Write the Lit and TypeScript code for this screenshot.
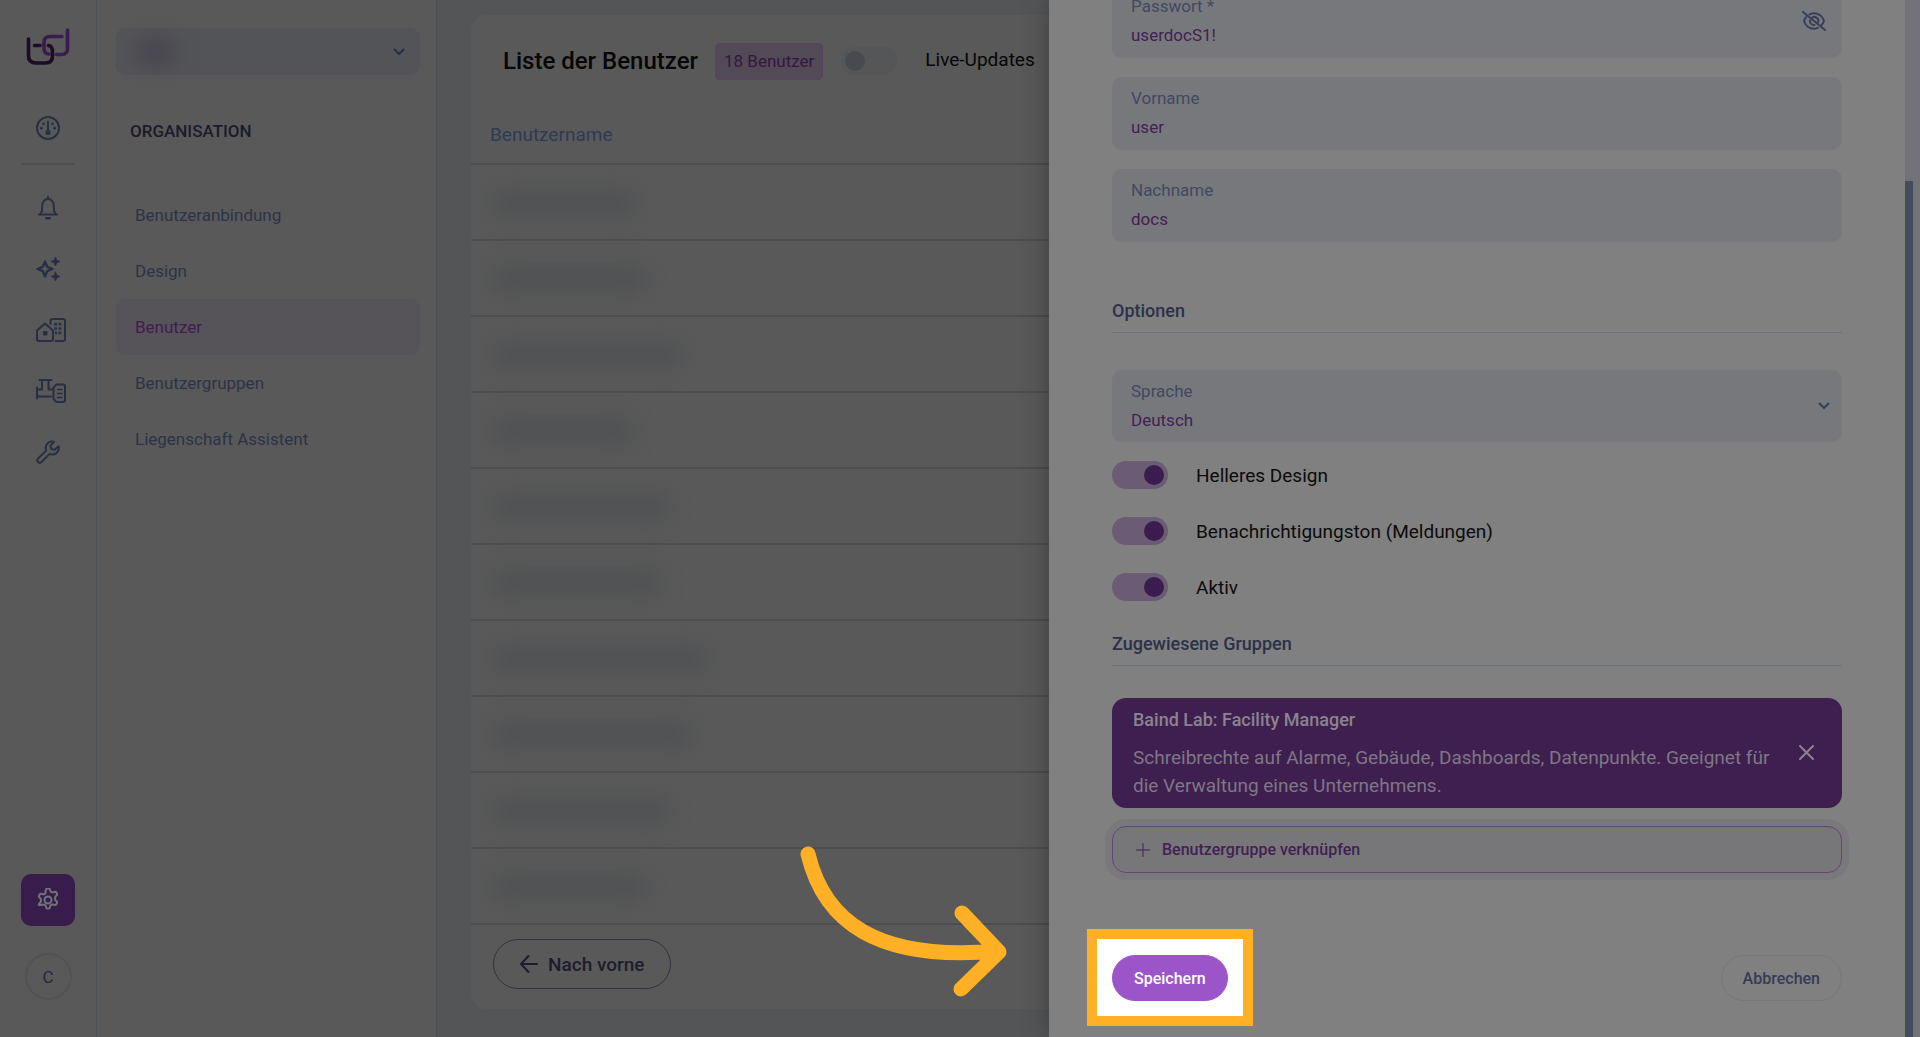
import { LitElement, html, css, svg } from "lit";
import { customElement } from "lit/decorators.js";
import { classMap } from "lit/directives/class-map.js";

const icons = {
  gauge: svg`<circle cx="12" cy="12" r="11"/><path d="M12 5.5v10"/><g fill="currentColor" stroke="none"><circle cx="12" cy="16.5" r="2.6"/><circle cx="7.6" cy="7.8" r="1.4"/><circle cx="16.4" cy="7.8" r="1.4"/><circle cx="5.4" cy="12.2" r="1.4"/><circle cx="18.6" cy="12.2" r="1.4"/></g>`,
  bell: svg`<path d="M12 1v2M3 18.5h18M4.5 18c1.6-1.800 1.700-4 1.700-7.500C6.200 6 8.500 3 12 3s5.800 3 5.800 7.500c0 3.500.1 5.700 1.700 7.500"/><path d="M9 21h6a3 2.600 0 0 1-6 0z" fill="currentColor" stroke="none"/>`,
  sparkles: svg`<path d="M9 4.500l2.200 5.300L16.500 12l-5.300 2.200L9 19.500l-2.200-5.300L1.500 12l5.300-2.200z" stroke-width="2.400"/><path d="M19.500 0l1.300 3.200L24 4.500l-3.200 1.300L19.500 9l-1.300-3.200L15 4.500l3.200-1.300zM19.500 15l1.300 3.200 3.200 1.300-3.200 1.300L19.500 24l-1.300-3.200-3.200-1.300 3.200-1.300z" fill="currentColor" stroke-width="0.8"/>`,
  buildings: svg`<path d="M1 12.500L9 5.500l8 7V21a2 2 0 0 1-2 2H3a2 2 0 0 1-2-2z"/><path d="M14.500 6V3a2 2 0 0 1 2-2H27a2 2 0 0 1 2 2v18a2 2 0 0 1-2 2h-7.500"/><g fill="currentColor" stroke="none"><rect x="7" y="13" width="4.500" height="4.500" rx="1"/><path d="M18.200 4.800h2.800v2.600h-2.800zM22.500 4.800h2.800v2.600h-2.800zM18.200 9.200h2.800v2.600h-2.800zM22.500 9.200h2.800v2.600h-2.800zM19 13.600h2v2.600h-2zM22.500 13.600h2.800v2.600h-2.800z"/></g>`,
  plant: svg`<path d="M1 8.500v11M1 10.500h5V1.500M3.500 1h12M12.500 1.500v9h3.500M1 17.500h14"/><path d="M20.500 5.500H27a2 2 0 0 1 2 2V21a2 2 0 0 1-2 2h-6.500L17.500 20V8.500z"/><path d="M21.500 10.500h4.500M21.500 14.500h4.500M21.500 18.500h4.500" stroke-width="1.500"/>`,
  wrench: svg`<path d="M15.500 1.600a6.500 6.500 0 0 0-5.300 9L1.800 18.800a2.500 2.500 0 0 0 3.500 3.500l8.300-8.400a6.500 6.500 0 0 0 9-7.700l-3.900 3.600-3.400-.7-.9-3.500 3.700-3.600a6.500 6.500 0 0 0-2.600-.4z"/>`,
  gear: svg`<path d="M9.600 3.600L10.200 1.700Q10.400 1 11.200 1h1.600q.8 0 1 .7l.6 1.900q.2.600.9.900l.6.300q.6.300 1.200.1l1.900-.5q.8-.2 1.200.5l.8 1.400q.4.700-.1 1.300l-1.300 1.400q-.5.500-.5 1.200v1.600q0 .7.500 1.200l1.300 1.400q.5.600.1 1.300l-.8 1.400q-.4.700-1.200.5l-1.900-.5q-.6-.2-1.200.1l-.6.300q-.7.300-.9.900l-.6 1.900q-.2.700-1 .7h-1.600q-.8 0-1-.7l-.6-1.900q-.2-.6-.9-.9l-.6-.3q-.6-.3-1.200-.1l-1.900.5q-.8.200-1.200-.5L3 17.700q-.4-.7.1-1.300L4.400 15q.5-.5.500-1.200v-1.600q0-.7-.5-1.200L3.100 9.600q-.5-.6-.1-1.300l.8-1.400q.4-.7 1.200-.5l1.900.5q.6.200 1.200-.1l.6-.3q.7-.3.8-.9z" transform="translate(0 -.6)"/><circle cx="12" cy="12" r="3.500"/>`,
  chevron: svg`<path d="M1.500 1.500L6 6l4.500-4.500"/>`,
  back: svg`<path d="M17 9H1M8.500 1L1 9l7.500 8"/>`,
  eyeOff: svg`<path d="M1 1l22 18M7.500 3.300C8.900 2.700 10.400 2.300 12 2.300c5 0 8.700 3.600 10 7.700-.5 1.500-1.300 2.900-2.500 4.100M4 6.200C3 7.400 2.400 8.700 2 10c1.300 4.100 5 7.700 10 7.700 1.400 0 2.600-.3 3.800-.8"/><path d="M10 6.700a4 4 0 0 1 6 4.800M8 9.500a4 4 0 0 0 4.500 4.500"/>`,
  close: svg`<path d="M1 1l13 13M14 1L1 14"/>`,
  plus: svg`<path d="M7 .5v13M.5 7h13"/>`,
};

const icon = (shape: unknown, w: number, h: number, stroke = 2) => html`
  <svg width=${w} height=${h} viewBox="0 0 ${w} ${h}" fill="none" stroke="currentColor"
    stroke-width=${stroke} stroke-linecap="round" stroke-linejoin="round" aria-hidden="true">${shape}</svg>`;

const base = css`
  :host {
    display: block;
    font-family: Roboto, "Liberation Sans", sans-serif;
  }
  * { box-sizing: border-box; }
  svg { display: block; flex: none; }
  button, input, select { font: inherit; margin: 0; }
  button { cursor: pointer; }
  .switch {
    appearance: none;
    flex: none;
    width: 56px;
    height: 28px;
    border-radius: 14px;
    padding: 4px;
    background: #6b5b75;
    display: flex;
    justify-content: flex-end;
  }
  .switch::before {
    content: "";
    width: 20px;
    height: 20px;
    border-radius: 50%;
    background: #3b1c4e;
  }
  .switch.off { background: #545658; justify-content: flex-start; }
  .switch.off::before { background: #474b50; }
`;

@customElement("side-rail")
class SideRail extends LitElement {
  static styles = [base, css`
    nav {
      height: 100%;
      display: flex;
      flex-direction: column;
      align-items: center;
      padding: 28px 0 37px;
      color: #292f43;
      border-right: 1px solid #4c5156;
    }
    .list {
      display: flex;
      flex-direction: column;
      gap: 37px;
      padding-left: 36px;
      width: 100%;
    }
    a { color: inherit; display: block; }
    .first { padding: 50px 0 23px; }
    .rule {
      width: 54px;
      height: 2px;
      background: #4c5156;
      margin-bottom: 31px;
    }
    .settings {
      margin-top: auto;
      width: 54px;
      height: 52px;
      border-radius: 10px;
      background: #381c4b;
      color: #74717a;
      display: grid;
      place-items: center;
    }
    .avatar {
      margin-top: 27px;
      width: 47px;
      height: 47px;
      border-radius: 50%;
      border: 2px solid #535353;
      background: none;
      color: #23283a;
      font-size: 17px;
      padding: 0;
    }
  `];
  render() {
    return html`<nav aria-label="Hauptnavigation">
      <svg width="44" height="38" viewBox="0 0 44 38" fill="none" stroke-width="3.6" stroke-linecap="round" aria-hidden="true">
        <path stroke="#3b1c4e" d="M41.500 2v18.500q0 6-6 6h-5M36 8.500H24q-6 0-6 6V20q0 6 5 6"/>
        <path stroke="#1d0c26" d="M2.500 11v16.500q0 7.500 7.500 7.500h9.500q7 0 7-7V24q0-6-4-6.500M8.500 17.500H14"/>
      </svg>
      <a class="first" href="#dashboard" aria-label="Dashboard">${icon(icons.gauge, 24, 24)}</a>
      <div class="rule"></div>
      <div class="list">
        <a href="#alarms" aria-label="Meldungen">${icon(icons.bell, 24, 24)}</a>
        <a href="#assistant" aria-label="Assistent">${icon(icons.sparkles, 24, 24)}</a>
        <a href="#buildings" aria-label="Gebäude">${icon(icons.buildings, 30, 24)}</a>
        <a href="#plants" aria-label="Anlagen">${icon(icons.plant, 30, 24)}</a>
        <a href="#tools" aria-label="Werkzeuge">${icon(icons.wrench, 24, 24)}</a>
      </div>
      <a class="settings" href="#settings" aria-label="Einstellungen">${icon(icons.gear, 24, 24)}</a>
      <button class="avatar">C</button>
    </nav>`;
  }
}

@customElement("section-nav")
class SectionNav extends LitElement {
  static styles = [base, css`
    nav {
      height: 100%;
      padding: 28px 16px 0 19px;
      border-right: 1px solid #4c4e56;
    }
    .org {
      position: relative;
      display: flex;
      align-items: center;
      justify-content: flex-end;
      height: 47px;
      padding-right: 15px;
      border-radius: 10px;
      background: #525457;
      color: #292f43;
    }
    .org select {
      position: absolute;
      inset: 0;
      width: 100%;
      appearance: none;
      border: 0;
      background: none;
    }
    .redacted {
      position: absolute;
      left: 20px;
      top: 10px;
      width: 40px;
      height: 28px;
      border-radius: 14px;
      background: #494650;
      filter: blur(10px);
    }
    h2 {
      margin: 0;
      padding: 46px 14px 44px;
      font-size: 17px;
      line-height: 20px;
      font-weight: 500;
      color: #1b1b2a;
    }
    a {
      display: block;
      padding: 0 19px;
      line-height: 56px;
      font-size: 17px;
      color: #2d3346;
      text-decoration: none;
      border-radius: 10px;
    }
    .list { padding-top: 2px; }
    a.active { background: #565359; color: #3d1e52; }
  `];
  render() {
    const items = ["Benutzeranbindung", "Design", "Benutzer", "Benutzergruppen", "Liegenschaft Assistent"];
    return html`<nav>
      <div class="org">
        <span class="redacted"></span>
        ${icon(icons.chevron, 12, 8)}
        <select aria-label="Organisation"><option></option></select>
      </div>
      <h2>ORGANISATION</h2>
      <div class="list">
        ${items.map((t) => html`<a href="#${t}" class=${classMap({ active: t === "Benutzer" })}>${t}</a>`)}
      </div>
    </nav>`;
  }
}

@customElement("user-list")
class UserList extends LitElement {
  static styles = [base, css`
    .card {
      background: #595959;
      border-radius: 14px;
      overflow: hidden;
    }
    header {
      display: flex;
      align-items: center;
      height: 92px;
      padding: 0 32px;
    }
    h1 {
      margin: 0;
      font-size: 24px;
      font-weight: 500;
      color: #060606;
    }
    .badge {
      margin: 0 18px 0 17px;
      padding: 0 8px;
      border: 1px solid #57435f;
      border-radius: 5px;
      background: #524a56;
      color: #321840;
      font-size: 17px;
      line-height: 35px;
    }
    label { margin-left: 28px; font-size: 19px; line-height: 24px; padding-bottom: 2px; color: #060606; }
    table { width: 100%; border-collapse: collapse; }
    th {
      height: 57px;
      padding: 0 19px 2px;
      text-align: left;
      font-weight: 400;
      font-size: 19px;
      color: #2f3a54;
    }
    td { height: 76px; padding: 2px 22px 0; }
    th, td { border-bottom: 2px solid #4b4d4f; }
    .redacted {
      display: block;
      height: 24px;
      border-radius: 12px;
      background: #4e5154;
      filter: blur(10px);
    }
    footer { padding: 14px 22px 20px; }
    .back {
      display: flex;
      align-items: center;
      gap: 10px;
      height: 50px;
      padding: 0 26px;
      border: 1px solid #33323f;
      border-radius: 25px;
      background: none;
      color: #1d1d2c;
      font-size: 19px;
      font-weight: 500;
    }
  `];
  render() {
    const widths = [142, 154, 188, 140, 176, 168, 214, 198, 176, 154];
    return html`<section class="card">
      <header>
        <h1>Liste der Benutzer</h1>
        <span class="badge">18 Benutzer</span>
        <input class="switch off" type="checkbox" id="live">
        <label for="live">Live-Updates</label>
      </header>
      <table>
        <thead><tr><th>Benutzername</th></tr></thead>
        <tbody>${widths.map((w) => html`<tr><td><span class="redacted" style="width:${w}px"></span></td></tr>`)}</tbody>
      </table>
      <footer><button class="back">${icon(icons.back, 18, 18)}Nach vorne</button></footer>
    </section>`;
  }
}

@customElement("user-drawer")
class UserDrawer extends LitElement {
  static styles = [base, css`
    .drawer {
      height: 100%;
      display: flex;
      background: #808080;
      box-shadow: 0 0 26px #0000004d;
      overflow: hidden;
    }
    form {
      flex: 1;
      min-width: 0;
      display: flex;
      flex-direction: column;
      justify-content: flex-end;
      padding: 0 63px 36px;
    }
    .track { flex: none; width: 15px; background: #737279; display: flex; align-items: flex-end; }
    .thumb { width: 8px; height: calc(100% - 181px); background: #464d5a; }
    .field {
      position: relative;
      flex: none;
      height: 73px;
      padding: 10px 19px 0;
      margin-bottom: 19px;
      border-radius: 10px;
      background: #77787c;
    }
    .field.language { height: 72px; }
    .field label { display: block; font-size: 17px; line-height: 22px; color: #414960; }
    .field input, .field select {
      display: block;
      width: 100%;
      height: 36px;
      padding: 0;
      border: 0;
      outline: 0;
      appearance: none;
      background: none;
      font-size: 17px;
      color: #432054;
    }
    .reveal {
      position: absolute;
      right: 16px;
      top: 26px;
      padding: 0;
      border: 0;
      background: none;
      color: #363e5a;
    }
    .arrow {
      position: absolute;
      right: 12px;
      top: 32px;
      color: #363e5a;
      pointer-events: none;
    }
    h3 {
      flex: none;
      margin: 0;
      padding-bottom: 9px;
      border-bottom: 1px solid #6c727c;
      font-size: 18px;
      line-height: 24px;
      font-weight: 500;
      color: #2c3149;
    }
    .options { margin: 38px 0 37px; }
    .toggles { display: flex; flex-direction: column; gap: 28px; }
    .toggle { display: flex; align-items: center; gap: 28px; height: 28px; font-size: 19px; color: #0b0b0b; }
    .groups { margin-top: 31px; margin-bottom: 32px; }
    .group {
      display: flex;
      align-items: center;
      gap: 20px;
      padding: 7px 28px 8px 21px;
      min-height: 110px;
      border-radius: 14px;
      background: #3e1f50;
      color: #7f7783;
    }
    .group div { flex: 1; }
    .group h4 { margin: 0 0 9px; font-size: 18px; line-height: 30px; font-weight: 500; color: #8b838f; }
    .group p { margin: 0; font-size: 19px; line-height: 28px; }
    .remove { padding: 0; border: 0; background: none; color: #8b838f; }
    .link {
      flex: none;
      display: flex;
      align-items: center;
      gap: 12px;
      height: 47px;
      margin-top: 18px;
      padding: 0 23px;
      border: 1px solid #644578;
      border-radius: 14px;
      background: #777779;
      box-shadow: 0 0 0 7px #79797b;
      color: #421f55;
      font-size: 16px;
      font-weight: 500;
    }
    .actions { display: flex; justify-content: space-between; margin-top: 82px; }
    .actions button { height: 46px; padding: 0 21px; border-radius: 23px; font-size: 16px; font-weight: 500; }
    .focus { position: relative; }
    .focus::before {
      content: "";
      position: absolute;
      inset: -26px -25px -25px;
      border: 10px solid #ffb024;
      background: #fff;
    }
    .actions .save { position: relative; border: 1px solid #9b55c9; background: #9b55c9; color: #fff; }
    .actions .cancel { border: 1px solid #77777c; background: none; color: #343c57; }
  `];
  render() {
    const toggles = ["Helleres Design", "Benachrichtigungston (Meldungen)", "Aktiv"];
    return html`<div class="drawer">
      <form>
        <div class="field">
          <label for="pw">Passwort *</label><input id="pw" value="userdocS1!">
          <button class="reveal" type="button" aria-label="Passwort verbergen">${icon(icons.eyeOff, 24, 20)}</button>
        </div>
        <div class="field"><label for="first">Vorname</label><input id="first" value="user"></div>
        <div class="field"><label for="last">Nachname</label><input id="last" value="docs"></div>
        <h3 class="options">Optionen</h3>
        <div class="field language">
          <label for="lang">Sprache</label>
          <select id="lang"><option>Deutsch</option></select>
          <span class="arrow">${icon(icons.chevron, 12, 8)}</span>
        </div>
        <div class="toggles">
          ${toggles.map((t, i) => html`<div class="toggle">
            <input class="switch" type="checkbox" id="opt${i}" checked><label for="opt${i}">${t}</label>
          </div>`)}
        </div>
        <h3 class="groups">Zugewiesene Gruppen</h3>
        <div class="group">
          <div>
            <h4>Baind Lab: Facility Manager</h4>
            <p>Schreibrechte auf Alarme, Gebäude, Dashboards, Datenpunkte. Geeignet für die Verwaltung eines Unternehmens.</p>
          </div>
          <button class="remove" type="button" aria-label="Gruppe entfernen">${icon(icons.close, 15, 15)}</button>
        </div>
        <button class="link" type="button">${icon(icons.plus, 14, 14, 1)}Benutzergruppe verknüpfen</button>
        <div class="actions">
          <span class="focus"><button class="save" type="button">Speichern</button></span>
          <button class="cancel" type="button">Abbrechen</button>
        </div>
      </form>
      <div class="track"><div class="thumb"></div></div>
    </div>`;
  }
}

@customElement("app-root")
class AppRoot extends LitElement {
  static styles = [base, css`
    .page {
      position: relative;
      height: 100vh;
      display: grid;
      grid-template-columns: 97px 340px minmax(0, 1fr);
      background: #595959;
      overflow: hidden;
    }
    main { padding: 15px 34px 28px; background: #535557; }
    .overlay { position: absolute; top: 0; right: 0; bottom: 0; left: 1049px; }
    .pointer { position: absolute; left: 800px; top: 845px; }
  `];
  render() {
    return html`<div class="page">
      <side-rail></side-rail>
      <section-nav></section-nav>
      <main><user-list></user-list></main>
      <user-drawer class="overlay"></user-drawer>
      <svg class="pointer" width="208" height="153" viewBox="800 845 208 153" fill="none" stroke="#ffb024"
        stroke-width="15" stroke-linecap="round" stroke-linejoin="round" aria-hidden="true">
        <path d="M808 854C824 921 876 962 998 951M962 913l37 39-38 37"/>
      </svg>
    </div>`;
  }
}
